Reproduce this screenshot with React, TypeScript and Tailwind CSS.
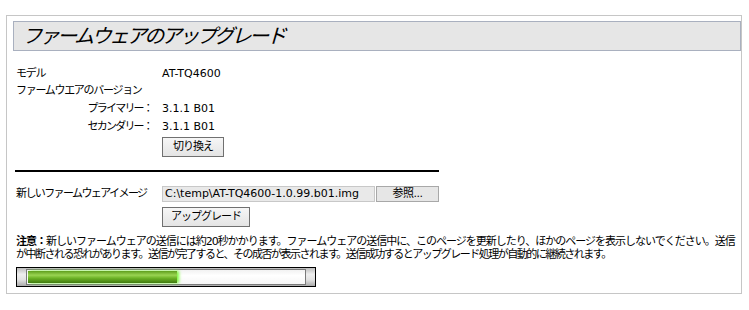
import React from 'react'

const jp = "font-['DejaVu_Sans','Noto_Sans_CJK_JP',sans-serif]"

function Btn({ label, w }: { label: string; w: string }) {
  return (
    <button
      className={`${w} h-[20px] border border-[#707070] bg-[linear-gradient(to_bottom,#f6f6f6,#e4e4e4)] text-[11px] tracking-[-1px] text-black flex items-center justify-center`}
    >
      {label}
    </button>
  )
}

export default function App() {
  const progress = 54

  return (
    <div className={`w-[749px] h-[310px] bg-white pt-[15px] pl-[6px] text-[11px] text-black ${jp}`}>
      <div className="w-[736px] h-[279px] border border-[#c6c6c6] pl-[6px] pt-[5px]">
        {/* Title */}
        <div className="h-[30px] border border-[#a9b0bf] bg-[#e6e6e6] pl-[10px] flex items-center">
          <h1 className="inline-block [transform:skewX(-16deg)] text-[20px] tracking-[-2.5px] leading-none text-black">
            ファームウェアのアップグレード
          </h1>
        </div>

        <div className="pl-[3px] pt-[14px]">
          {/* Model and firmware version */}
          <div className="grid grid-cols-[146px_1fr]">
            <div className="h-[18px] flex items-center tracking-[-1.3px]">モデル</div>
            <div className="h-[18px] flex items-center">AT-TQ4600</div>
            <div className="col-span-2 h-[17px] flex items-center tracking-[-1.3px]">ファームウエアのバージョン</div>
            <div className="h-[19px] flex items-center justify-end pr-[10px] tracking-[-1.8px]">プライマリー：</div>
            <div className="h-[19px] flex items-center">3.1.1 B01</div>
            <div className="h-[17px] flex items-center justify-end pr-[10px] tracking-[-1.8px]">セカンダリー：</div>
            <div className="h-[17px] flex items-center">3.1.1 B01</div>
            <div />
            <div className="pt-[1px]">
              <Btn label="切り換え" w="w-[62px]" />
            </div>
          </div>

          <div className="-ml-px mt-[13px] w-[424px] h-[2px] bg-black" />

          {/* New firmware image */}
          <div className="grid grid-cols-[146px_1fr] mt-[14px]">
            <div className="h-[16px] flex items-center tracking-[-1.6px]">新しいファームウェアイメージ</div>
            <div className="flex h-[16px]">
              <div className="w-[213px] h-[16px] border border-[#c8c8c8] bg-[#e9e9e9] pl-[2px] flex items-center whitespace-nowrap">
                C:\temp\AT-TQ4600-1.0.99.b01.img
              </div>
              <button className="ml-px w-[63px] h-[16px] border border-[#a8a8a8] bg-[#e6e6e6] flex items-center justify-center tracking-[-0.5px]">
                参照...
              </button>
            </div>
            <div />
            <div className="pt-[5px]">
              <Btn label="アップグレード" w="w-[88px]" />
            </div>
          </div>

          {/* Notice */}
          <div className="mt-[8px] leading-[13px] whitespace-nowrap">
            <div className="tracking-[-1px]">
              <span className="font-bold">注意：</span>新しいファームウェアの送信には約20秒かかります。ファームウェアの送信中に、このページを更新したり、ほかのページを表示しないでください。送信
            </div>
            <div className="tracking-[-1.5px]">
              が中断される恐れがあります。送信が完了すると、その成否が表示されます。送信成功するとアップグレード処理が自動的に継続されます。
            </div>
          </div>

          {/* Progress bar */}
          <div className="mt-[6px] w-[300px] h-[20px] border border-black bg-[linear-gradient(to_bottom,#bdbdbd,#eeeeee_35%,#e2e2e2_65%,#a9a9a9)] px-[9px] py-[1px]">
            <div className="h-[16px] border border-[#7a7a7a] bg-[linear-gradient(to_bottom,#f2f2f2,#ffffff_40%,#f6f6f6)] p-[1px]">
              <div
                className="h-full bg-[linear-gradient(to_bottom,#5e9e1c,#9ad452_35%,#6cb226_60%,#3f7a0e)] shadow-[2px_0_3px_#7dfa3a]"
                style={{ width: `${progress}%` }}
              />
            </div>
          </div>
        </div>
      </div>
    </div>
  )
}
